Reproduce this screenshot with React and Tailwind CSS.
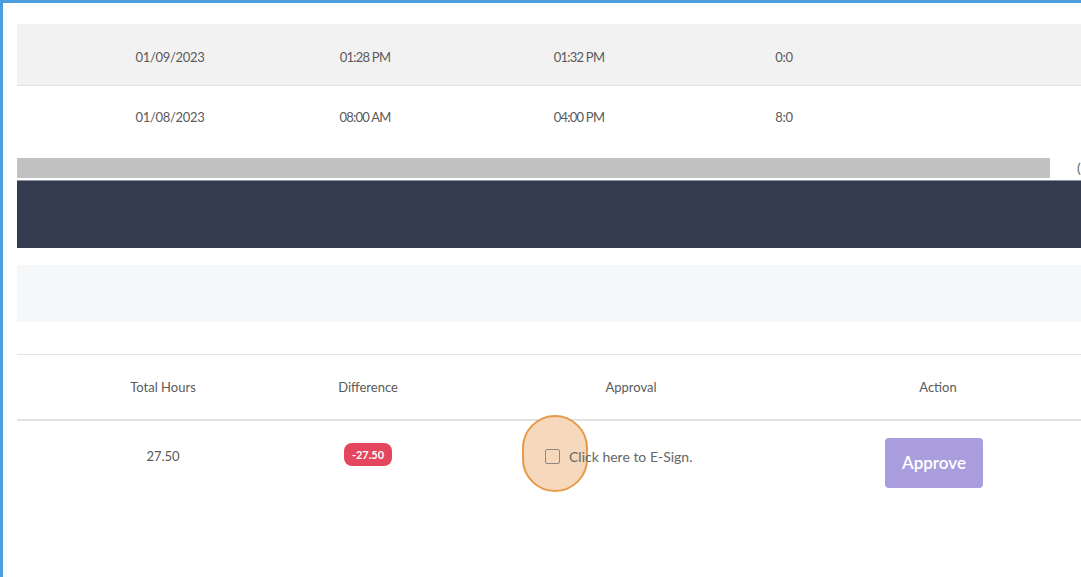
const entries = [
  { date: '01/09/2023', inAt: '01:28 PM', outAt: '01:32 PM', hours: '0:0' },
  { date: '01/08/2023', inAt: '08:00 AM', outAt: '04:00 PM', hours: '8:0' },
];

export default function App() {
  return (
    <div
      className="w-[1081px] h-[577px] overflow-hidden bg-white border-l-[3px] border-t-[3px] border-[#4b9fe1] text-[#5a5a5a] text-[13px]"
      style={{ fontFamily: 'Lato, "Source Sans Pro", "Liberation Sans", sans-serif' }}
    >
      <div className="ml-[14px] pt-[21px]">
        {/* time entries */}
        <div className="w-[1100px]">
          {entries.map((e, i) => (
            <div
              key={e.date}
              className={`flex items-center ${i === 0 ? 'h-[62px] pt-[6px] bg-[#f2f2f2] border-b border-[#e3e3e3]' : 'h-[64px] bg-white'}`}
            >
              <div className="w-[306px] text-center tracking-tight">{e.date}</div>
              <div className="w-[84px] text-center tracking-[-0.06em]">{e.inAt}</div>
              <div className="w-[130px]" />
              <div className="w-[84px] text-center tracking-[-0.06em]">{e.outAt}</div>
              <div className="w-[143px]" />
              <div className="w-[40px] text-center tracking-tight">{e.hours}</div>
            </div>
          ))}
        </div>

        {/* horizontal scrollbar */}
        <div className="flex items-center mt-[8px] h-[20px]">
          <div className="w-[1033px] h-[20px] bg-[#c1c1c1]" />
          <span className="ml-[27px] text-[#666] text-[14px] leading-none">(</span>
        </div>

        {/* dark footer band */}
        <div className="mt-[2px] h-[68px] bg-[#343b4f] border-t border-[#8a93a8]" />

        <div className="h-[17px] bg-white" />
        <div className="h-[57px] bg-[#f6f7f9]" />
        <div className="h-[33px] bg-white border-b border-[#e4e4e4]" />

        {/* summary table */}
        <div className="flex items-center h-[66px] pt-[2px] border-b-2 border-[#e2e2e2]">
          <div className="w-[292px] text-center">Total Hours</div>
          <div className="w-[118px] text-center">Difference</div>
          <div className="w-[408px] text-center">Approval</div>
          <div className="w-[206px] text-center">Action</div>
        </div>
        <div className="flex items-start pt-[17px]">
          <div className="w-[292px] text-center pt-[9px]">27.50</div>
          <div className="w-[118px] flex justify-center pt-[5px]">
            <span className="px-[8px] h-[23px] leading-[23px] rounded-[8px] bg-[#e4465e] text-white text-[11px] font-bold">-27.50</span>
          </div>
          <div className="w-[408px] pl-[118px] pt-[8px]">
            <div className="relative flex items-center">
              <span className="absolute -left-[23px] -top-[31px] w-[66px] h-[77px] rounded-full bg-[#f6d8bc] border-2 border-[#e79a48]" />
              <span className="relative w-[15px] h-[15px] border border-[#888] rounded-[2px]" />
              <span className="relative ml-[9px] text-[14px] text-[#666]">Click here to E-Sign.</span>
            </div>
          </div>
          <div className="w-[198px] flex justify-center">
            <button className="w-[98px] h-[50px] rounded-[4px] bg-[#a99ddd] text-white text-[17px] font-semibold">Approve</button>
          </div>
        </div>
      </div>
    </div>
  );
}
